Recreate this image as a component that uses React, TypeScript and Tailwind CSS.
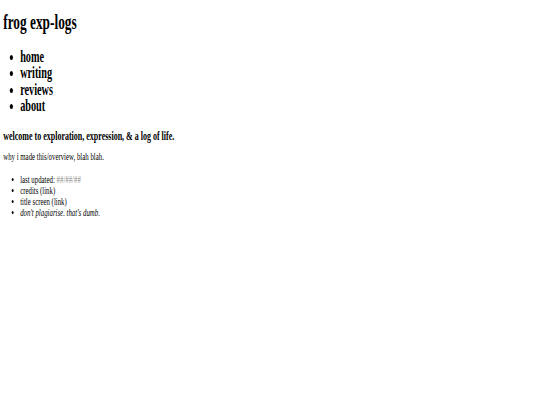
const nav = ["home", "writing", "reviews", "about"];

export default function App() {
  return (
    <div className="min-h-screen w-full bg-white text-black overflow-hidden">
      <div
        className="origin-top-left scale-x-[0.65] w-[830px] pl-[5px] pt-[10px]"
        style={{ fontFamily: '"Liberation Serif", "Times New Roman", serif' }}
      >
        <h1 className="text-[20.5px] leading-[24px] font-bold">frog exp-logs</h1>

        <ul className="mt-[14.5px] list-disc pl-[26px] text-[15.75px] leading-[16.5px] font-bold">
          {nav.map((item) => (
            <li key={item}>{item}</li>
          ))}
        </ul>

        <h3 className="mt-[15.3px] text-[12.3px] leading-[12px] font-bold">
          welcome to exploration, expression, &amp; a log of life.
        </h3>

        <p className="mt-[9.35px] text-[10.5px] leading-[11px]">
          why i made this/overview, blah blah.
        </p>

        <ul className="mt-[11.95px] list-disc pl-[26px] text-[10.5px] leading-[11px]">
          <li>
            last updated: <span className="text-[#8a8a8a]">##/##/##</span>
          </li>
          <li>credits (link)</li>
          <li>title screen (link)</li>
          <li className="italic">don't plagiarise. that's dumb.</li>
        </ul>
      </div>
    </div>
  );
}
